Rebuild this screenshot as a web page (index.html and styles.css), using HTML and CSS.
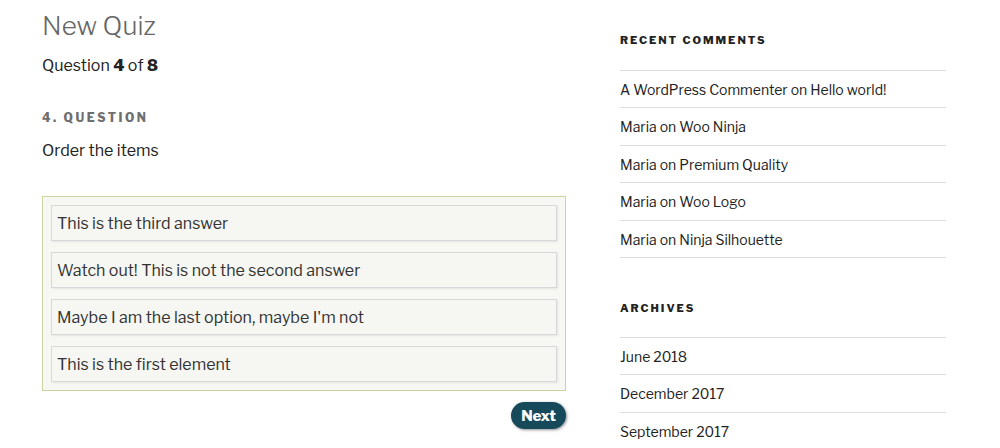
FILE: index.html
```html
<!DOCTYPE html>
<html lang="en">
<head>
  <meta charset="UTF-8">
  <meta name="viewport" content="width=device-width, initial-scale=1.0">
  <title>New Quiz</title>
  <link rel="stylesheet" href="styles.css">
</head>
<body>
  <div class="wrap">
    <main class="content">
      <h1 class="entry-title">New Quiz</h1>
      <p class="progress">Question <b>4</b> of <b>8</b></p>

      <h3 class="question-title">4. Question</h3>
      <p class="question-text">Order the items</p>

      <ul class="sortable">
        <li>This is the third answer</li>
        <li>Watch out! This is not the second answer</li>
        <li>Maybe I am the last option, maybe I'm not</li>
        <li>This is the first element</li>
      </ul>

      <div class="actions">
        <button type="button" class="btn-next">Next</button>
      </div>
    </main>

    <aside class="sidebar">
      <section class="widget">
        <h2 class="widget-title">Recent Comments</h2>
        <ul>
          <li><a href="#">A WordPress Commenter</a> on <a href="#">Hello world!</a></li>
          <li>Maria on <a href="#">Woo Ninja</a></li>
          <li>Maria on <a href="#">Premium Quality</a></li>
          <li>Maria on <a href="#">Woo Logo</a></li>
          <li>Maria on <a href="#">Ninja Silhouette</a></li>
        </ul>
      </section>

      <section class="widget">
        <h2 class="widget-title">Archives</h2>
        <ul>
          <li><a href="#">June 2018</a></li>
          <li><a href="#">December 2017</a></li>
          <li><a href="#">September 2017</a></li>
        </ul>
      </section>
    </aside>
  </div>
</body>
</html>
```

FILE: styles.css
```css
body {
  font-family: "Libre Franklin", Roboto, "Liberation Sans", sans-serif;
  color: #222;
  background-color: #fff;
  margin: 0;
  padding: 0;
}

.wrap {
  display: flex;
  padding: 0 54px 0 42px;
  gap: 54px;
}

.content {
  width: 524px;
  flex: none;
}

.entry-title {
  font-size: 26px;
  font-weight: 300;
  color: #666;
  margin: 10px 0 0;
  line-height: 32px;
}

.progress {
  font-size: 16px;
  margin: 14px 0 0;
  line-height: 20px;
}

.progress b {
  font-weight: 800;
}

.question-title {
  font-size: 12px;
  font-weight: 800;
  letter-spacing: 0.21em;
  text-transform: uppercase;
  color: #6f6f6f;
  margin: 34px 0 0;
  line-height: 16px;
}

.question-text {
  font-size: 16px;
  margin: 15px 0 0;
  line-height: 20px;
}

.sortable {
  list-style: none;
  margin: 35px 0 0;
  padding: 8px;
  border: 1px solid #c9d49e;
  background-color: #f7f8f4;
  display: flex;
  flex-direction: column;
  gap: 11px;
}

.sortable li {
  height: 36px;
  box-sizing: border-box;
  padding: 0 5px;
  display: flex;
  align-items: center;
  font-size: 16px;
  color: #333;
  background-color: #f6f7f3;
  border: 1px solid #d8d8d8;
  box-shadow: 1px 1px 2px rgba(0, 0, 0, 0.08);
}

.actions {
  display: flex;
  justify-content: flex-end;
  margin-top: 11px;
}

.btn-next {
  font-family: inherit;
  font-size: 15px;
  font-weight: 800;
  color: #fff;
  background-color: #164a5b;
  border: none;
  border-radius: 14px;
  height: 27px;
  padding: 0 10px;
  box-shadow: 1px 1px 3px rgba(0, 0, 0, 0.45);
  cursor: pointer;
}

.sidebar {
  width: 326px;
  flex: none;
}

.widget {
  padding-top: 33px;
}

.widget + .widget {
  padding-top: 43px;
}

.widget-title {
  font-size: 11px;
  font-weight: 800;
  letter-spacing: 0.18em;
  text-transform: uppercase;
  color: #222;
  margin: 0 0 23px;
  line-height: 14px;
}

.widget + .widget .widget-title {
  margin-bottom: 22px;
}

.widget ul {
  list-style: none;
  margin: 0;
  padding: 0;
}

.widget li {
  font-size: 14px;
  line-height: 21px;
  padding: 8px 0 7.4px;
  border-top: 1px solid #ddd;
}

.widget li:last-child {
  border-bottom: 1px solid #ddd;
}

.widget a {
  color: #222;
  text-decoration: none;
}
```
